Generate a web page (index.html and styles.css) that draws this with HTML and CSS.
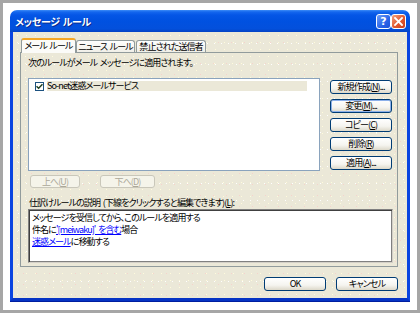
FILE: index.html
```html
<!DOCTYPE html>
<html lang="ja">
<head>
<meta charset="utf-8">
<title>メッセージ ルール</title>
<link rel="stylesheet" href="styles.css">
</head>
<body>
<div class="frame">
  <div class="window">
    <div class="titlebar">
      <span class="title">メッセージ ルール</span>
      <div class="tb-buttons">
        <span class="tb-btn help">?</span>
        <span class="tb-btn close"><svg width="9" height="9" viewBox="0 0 9 9"><path d="M1 1 L8 8 M8 1 L1 8" stroke="#fff" stroke-width="1.8" stroke-linecap="square"/></svg></span>
      </div>
    </div>
    <div class="client dither">
      <div class="tabs">
        <div class="tab active t1">メール ルール</div>
        <div class="tab t2">ニュース ルール</div>
        <div class="tab t3">禁止された送信者</div>
      </div>
      <div class="panel dither">
        <div class="label">次のルールがメール メッセージに適用されます。</div>
        <div class="mid">
          <div class="listbox">
            <div class="item">
              <span class="check"><svg width="7" height="7" viewBox="0 0 7 7"><path d="M0.5 3.2 L2.6 5.3 L6.5 1.2" fill="none" stroke="#1f3f1f" stroke-width="1.5"/></svg></span>
              <span class="item-text">So-net迷惑メールサービス</span>
            </div>
          </div>
          <div class="side-btns">
            <button class="btn">新規作成(<u>N</u>)...</button>
            <button class="btn focus">変更(<u>M</u>)...</button>
            <button class="btn">コピー(<u>C</u>)</button>
            <button class="btn">削除(<u>R</u>)</button>
            <button class="btn">適用(<u>A</u>)...</button>
          </div>
        </div>
        <div class="updown">
          <button class="btn disabled up">上へ(<u>U</u>)</button>
          <button class="btn disabled down">下へ(<u>D</u>)</button>
        </div>
        <div class="label desc-label">仕訳けルールの説明 (下線をクリックすると編集できます)(<u>L</u>):</div>
        <div class="desc">
          <div class="dline">メッセージを受信してから、このルールを適用する</div>
          <div class="dline">件名に<a class="link" href="#">'[meiwaku]' を含む</a>場合</div>
          <div class="dline"><a class="link" href="#">迷惑メール</a>に移動する</div>
        </div>
      </div>
      <div class="footer">
        <button class="btn">OK</button>
        <button class="btn">キャンセル</button>
      </div>
    </div>
  </div>
</div>
</body>
</html>
```
FILE: styles.css
```css
* { box-sizing: border-box; margin: 0; padding: 0; }
html, body { width: 420px; height: 313px; overflow: hidden; }
body {
  font-family: "Noto Sans CJK JP", "Noto Sans", sans-serif;
  font-size: 9px;
  letter-spacing: -0.9px;
  word-spacing: 1.5px;
  color: #000;
  font-feature-settings: "palt";
}
.frame {
  width: 420px;
  height: 313px;
  border: 3px solid #a6a6a6;
  background: #fff;
  padding: 7px 7px 9px 7px;
}
.window {
  width: 400px;
  height: 291px;
  display: flex;
  flex-direction: column;
}
.titlebar {
  height: 22px;
  flex: none;
  border-radius: 7px 7px 0 0;
  background: linear-gradient(#3d8cf7 0, #1466ee 2px, #0556e6 5px, #0051e0 50%, #0350dc 85%, #0443c4 100%);
  display: flex;
  align-items: center;
  padding: 0 4px 0 5px;
}
.title {
  flex: 1;
  color: #fff;
  font-weight: bold;
  font-size: 10px;
  letter-spacing: -0.3px;
  word-spacing: 1px;
  text-shadow: 1px 1px 0 #0c2a8c;
}
.tb-buttons { display: flex; }
.tb-btn {
  width: 15px;
  height: 15px;
  border: 1px solid #fff;
  border-radius: 3px;
  display: flex;
  align-items: center;
  justify-content: center;
  color: #fff;
  font-family: "DejaVu Sans", sans-serif;
  font-weight: bold;
  font-size: 11px;
  letter-spacing: 0;
  line-height: 1;
}
.help { background: linear-gradient(135deg, #6f9ef8, #2a64e8 60%, #1c50d8); }
.close { background: linear-gradient(135deg, #f3a27e, #e2582f 55%, #c9401e); }

.client {
  flex: 1;
  border: 3px solid #0a44e0;
  border-top: 0;
  border-bottom-color: #0634c4;
  box-shadow: 0 1px 0 #001ea0;
  padding: 6px 9px 7px 7px;
  display: flex;
  flex-direction: column;
}
.dither {
  background-color: #ebe8d8;
  background-image:
    radial-gradient(circle, #fffbdc 0.55px, transparent 0.95px),
    radial-gradient(circle, #f6d3cc 0.55px, transparent 0.95px),
    radial-gradient(circle, #ffffff 0.55px, transparent 0.95px);
  background-size: 9px 7px, 13px 11px, 7px 17px;
  background-position: 0 0, 4px 5px, 2px 3px;
}

.tabs {
  height: 15px;
  margin-bottom: -1px;
  display: flex;
  align-items: flex-end;
  padding-left: 1px;
  position: relative;
  z-index: 1;
}
.tab {
  height: 12px;
  margin-bottom: 1px;
  border: 1px solid #919b9c;
  border-bottom: 0;
  border-radius: 3px 3px 0 0;
  background: linear-gradient(#fefefe, #f0efe8);
  display: flex;
  align-items: center;
  justify-content: center;
  line-height: 10px;
  white-space: nowrap;
}
.tab.active {
  height: 15px;
  margin-bottom: 0;
  border-top: 2px solid #f5a623;
  background: #fbfbf8;
  padding-bottom: 1px;
}
.t1 { width: 55px; }
.t2 { width: 59px; }
.t3 { width: 70px; margin-left: 1px; }

.panel {
  height: 215px;
  flex: none;
  border: 1px solid #919b9c;
  padding: 4px 4px 0 7px;
}
.label {
  height: 12px;
  line-height: 12px;
  white-space: nowrap;
}
.mid {
  margin-top: 9px;
  height: 93px;
  display: flex;
  gap: 10px;
}
.listbox {
  width: 292px;
  height: 93px;
  border: 1px solid #8aa3bd;
  background: #fff;
  padding: 2px 12px 0 6px;
}
.item {
  display: flex;
  align-items: center;
  height: 10px;
  gap: 3px;
}
.check {
  width: 9px;
  height: 9px;
  border: 1px solid #1c5180;
  background: #fff;
  display: flex;
  align-items: center;
  justify-content: center;
  flex: none;
}
.item-text {
  flex: 1;
  height: 10px;
  line-height: 10px;
  background: #ebe8d8;
  white-space: nowrap;
}
.side-btns {
  width: 62px;
  padding-top: 2px;
  display: flex;
  flex-direction: column;
  gap: 5px;
}
.btn {
  height: 14px;
  border: 1px solid #003c74;
  border-radius: 3px;
  background: linear-gradient(#ffffff, #f5f4ef 60%, #dcd8c9);
  font: inherit;
  letter-spacing: inherit;
  word-spacing: inherit;
  color: #000;
  line-height: 12px;
  text-align: center;
  white-space: nowrap;
  padding: 0;
}
.btn.focus { box-shadow: inset 0 0 0 1px #8cb0ea; }
.btn.disabled {
  border-color: #c9c7ba;
  background: #f5f4ea;
  color: #aca899;
}
.updown {
  margin-top: 4px;
  height: 13px;
  display: flex;
  padding-left: 2px;
  gap: 20px;
}
.updown .btn { height: 13px; line-height: 11px; }
.up { width: 50px; }
.down { width: 55px; }
.desc-label { margin-top: 9px; padding-left: 1px; }
.desc {
  height: 54px;
  width: 365px;
  background: #fff;
  border: 1px solid #808080;
  border-right-color: #d4d0c8;
  border-bottom-color: #d4d0c8;
  box-shadow: inset 1px 1px 0 #404040, inset -1px -1px 0 #808080;
  padding: 2px 3px;
  white-space: nowrap;
}
.dline { height: 12px; line-height: 12px; }
.link { color: #0000ff; text-decoration: underline; }
.footer {
  margin-top: 10px;
  display: flex;
  justify-content: flex-end;
  gap: 10px;
}
.footer .btn { width: 62px; }
```
